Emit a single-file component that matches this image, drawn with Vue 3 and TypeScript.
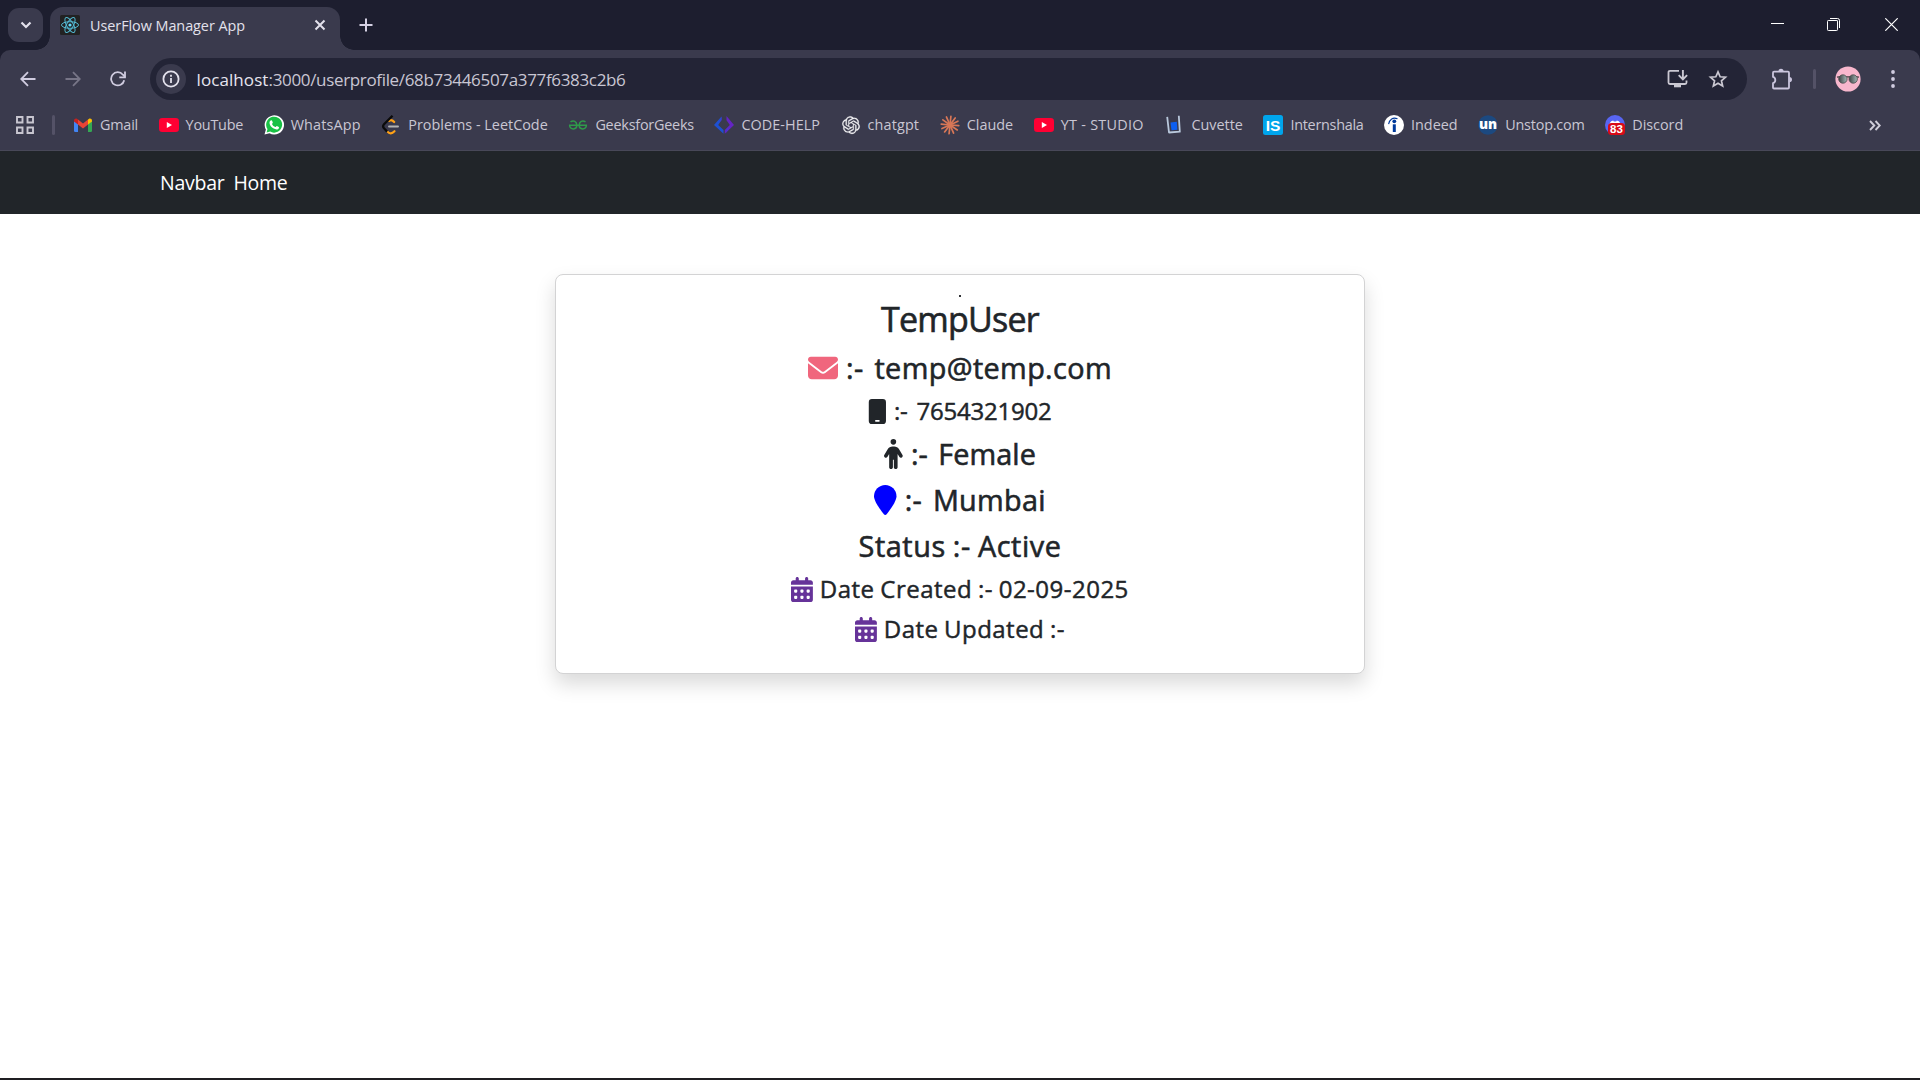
<script setup lang="ts">
import type { Directive } from 'vue'

interface Bookmark {
  id: string
  label: string
  width: number
}

interface ProfileRow {
  id: string
  size: 'lg' | 'md' | 'sm'
  text: string
  width: number
  icon?: 'mail' | 'phone' | 'person' | 'pin' | 'calendar'
}

/* Adjusts the tracking of a label until it takes the given width. */
const vFit: Directive<HTMLElement, number> = {
  mounted(el, { value }) {
    el.style.letterSpacing = '0px'
    const count = (el.textContent ?? '').length
    const natural = el.getBoundingClientRect().width
    el.style.letterSpacing = `${((value - natural) / count).toFixed(3)}px`
  },
}

const bookmarks: Bookmark[] = [
  { id: 'gmail', label: 'Gmail', width: 38 },
  { id: 'youtube', label: 'YouTube', width: 57.5 },
  { id: 'whatsapp', label: 'WhatsApp', width: 70 },
  { id: 'leetcode', label: 'Problems - LeetCode', width: 139.5 },
  { id: 'gfg', label: 'GeeksforGeeks', width: 98.5 },
  { id: 'codehelp', label: 'CODE-HELP', width: 78.5 },
  { id: 'chatgpt', label: 'chatgpt', width: 51.5 },
  { id: 'claude', label: 'Claude', width: 46.5 },
  { id: 'youtube', label: 'YT - STUDIO', width: 83 },
  { id: 'cuvette', label: 'Cuvette', width: 51.5 },
  { id: 'internshala', label: 'Internshala', width: 73 },
  { id: 'indeed', label: 'Indeed', width: 46.5 },
  { id: 'unstop', label: 'Unstop.com', width: 79.5 },
  { id: 'discord', label: 'Discord', width: 51 },
]

const rows: ProfileRow[] = [
  { id: 'name', size: 'lg', text: 'TempUser', width: 158 },
  { id: 'email', size: 'md', text: ':- temp@temp.com', width: 266, icon: 'mail' },
  { id: 'mobile', size: 'sm', text: ':- 7654321902', width: 157.5, icon: 'phone' },
  { id: 'gender', size: 'md', text: ':- Female', width: 125, icon: 'person' },
  { id: 'location', size: 'md', text: ':- Mumbai', width: 141, icon: 'pin' },
  { id: 'status', size: 'md', text: 'Status :- Active', width: 203 },
  { id: 'created', size: 'sm', text: 'Date Created :- 02-09-2025', width: 309, icon: 'calendar' },
  { id: 'updated', size: 'sm', text: 'Date Updated :-', width: 181, icon: 'calendar' },
]

const claudeRays = [0, 30, 58, 88, 118, 150, 180, 212, 240, 270, 300, 330]
</script>

<template>
  <div class="window">
    <header class="tabstrip">
      <button class="tab-search" aria-label="Search tabs">
        <svg width="12" height="8" viewBox="0 0 12 8"><path d="M1.500 1.500 6 6l4.500-4.500" fill="none" stroke="#e3e1ec" stroke-width="2.200" /></svg>
      </button>
      <div class="tab">
        <svg class="favicon" width="20" height="20" viewBox="0 0 20 20">
          <rect width="20" height="20" rx="1.500" fill="#222" />
          <g fill="none" stroke="#53b9d1" stroke-width="1">
            <ellipse cx="10" cy="10" rx="8.500" ry="3.300" />
            <ellipse cx="10" cy="10" rx="8.500" ry="3.300" transform="rotate(60 10 10)" />
            <ellipse cx="10" cy="10" rx="8.500" ry="3.300" transform="rotate(120 10 10)" />
          </g>
          <circle cx="10" cy="10" r="1.600" fill="#61dafb" />
        </svg>
        <span class="tab-title"><span v-fit="155">UserFlow Manager App</span></span>
        <svg class="tab-close" width="12" height="12" viewBox="0 0 12 12"><path d="M1.500 1.500l9 9M10.500 1.500l-9 9" stroke="#e3e1ec" stroke-width="2" /></svg>
      </div>
      <svg class="new-tab" width="14" height="14" viewBox="0 0 14 14"><path d="M7 .5v13M.5 7h13" stroke="#d5d1e4" stroke-width="2" /></svg>
      <div class="window-controls">
        <svg width="13" height="13" viewBox="0 0 13 13"><path d="M0 5.500h13" stroke="#fff" /></svg>
        <svg width="13" height="13" viewBox="0 0 13 13"><path d="M3 .5h7.500a2 2 0 0 1 2 2V10" fill="none" stroke="#fff" /><path d="M2.500 2.500h8v8" fill="none" stroke="#8d8d98" /><rect x=".5" y="2.500" width="10" height="10" rx=".8" fill="none" stroke="#fff" /></svg>
        <svg width="13" height="13" viewBox="0 0 13 13"><path d="M.3.3l12.400 12.400M12.700.3.3 12.700" stroke="#fff" stroke-width="1.200" /></svg>
      </div>
    </header>

    <section class="chrome">
      <div class="toolbar">
        <svg class="back" width="16" height="16" viewBox="0 0 16 16"><path d="M15.500 8H1.500M8 1.200 1.200 8 8 14.800" fill="none" stroke="#d0cce0" stroke-width="1.800" /></svg>
        <svg class="forward" width="16" height="16" viewBox="0 0 16 16"><path d="M.5 8h14M8 1.200 14.800 8 8 14.800" fill="none" stroke="#777587" stroke-width="1.800" /></svg>
        <svg class="reload" width="16" height="16" viewBox="0 0 16 16"><path d="M14.200 9.200A6.600 6.600 0 1 1 12.900 3.700L15 5.800" fill="none" stroke="#d0cce0" stroke-width="1.800" /><path d="M15 .5v5.800H9.300" fill="none" stroke="#d0cce0" stroke-width="1.800" /></svg>
        <div class="omnibox">
          <span class="site-info">
            <svg width="18" height="18" viewBox="0 0 18 18"><circle cx="9" cy="9" r="7.600" fill="none" stroke="#e3e1ec" stroke-width="1.800" /><path d="M9 8v5M9 4.800v1.900" stroke="#e3e1ec" stroke-width="1.800" /></svg>
          </span>
          <span class="url"><span v-fit="72" class="host">localhost</span><span v-fit="357">:3000/userprofile/68b73446507a377f6383c2b6</span></span>
          <svg class="install" width="21" height="20" viewBox="0 0 21 20"><path d="M12 1.800H3Q1.500 1.800 1.500 3.300V13.500Q1.500 15 3 15H18Q19.500 15 19.500 13.500V11.500" fill="none" stroke="#cac8d2" stroke-width="1.800" /><path d="M7 15h7v3.300H7z" fill="#cac8d2" /><path d="M15.900 1v9M11.700 6.200l4.200 4.200 4.200-4.200" fill="none" stroke="#cac8d2" stroke-width="1.900" /></svg>
          <svg class="star" width="20" height="20" viewBox="0 0 20 20"><path d="M10 2.800l2.150 4.950 5.350.5-4.050 3.550 1.200 5.250L10 14.250 5.350 17.050l1.200-5.250L2.500 8.250l5.350-.5z" fill="none" stroke="#cac8d2" stroke-width="1.700" /></svg>
        </div>
        <svg class="puzzle" width="22" height="22" viewBox="0 0 22 22"><path d="M2 4.700Q2 3.700 3 3.700H17Q18 3.700 18 4.700V19.500Q18 20.500 17 20.500H3Q2 20.500 2 19.500V15.200A3.300 3.300 0 0 0 2 8.900Z" fill="none" stroke="#cbc6de" stroke-width="1.800" stroke-linejoin="round" /><path d="M7.400 3.500A2.600 2.800 0 0 1 12.600 3.500ZM18.300 9A2.700 2.600 0 0 1 18.300 14.200Z" fill="#cbc6de" /></svg>
        <span class="separator"></span>
        <svg class="avatar" width="26" height="26" viewBox="0 0 26 26">
          <defs>
            <linearGradient id="lens"><stop offset="0" stop-color="#3c4143" /><stop offset="1" stop-color="#a5b8b7" /></linearGradient>
          </defs>
          <circle cx="13" cy="13" r="12.600" fill="#f8b7cd" />
          <path d="M2 11.200 4 10.800H22l2 .4" fill="none" stroke="#443f42" stroke-width="1.200" />
          <circle cx="7.900" cy="13" r="4.200" fill="url(#lens)" stroke="#4d4a4b" stroke-width=".8" />
          <circle cx="18.200" cy="13" r="4.200" fill="url(#lens)" stroke="#4d4a4b" stroke-width=".8" />
        </svg>
        <svg class="more" width="4" height="18" viewBox="0 0 4 18"><g fill="#d0cce0"><circle cx="2" cy="2" r="1.900" /><circle cx="2" cy="9" r="1.900" /><circle cx="2" cy="16" r="1.900" /></g></svg>
      </div>

      <nav class="bookmarks">
        <svg class="apps" width="18" height="18" viewBox="0 0 18 18"><path d="M1 1h5.500v5.500H1zM11.500 1H17v5.500h-5.500zM1 11.500h5.500V17H1zM11.500 11.500H17V17h-5.500z" fill="none" stroke="#c8c6d0" stroke-width="1.900" /></svg>
        <span class="separator bookmarks-separator"></span>
        <div v-for="mark in bookmarks" :key="mark.label" class="bookmark">
          <svg width="20" height="20" viewBox="0 0 20 20">
            <template v-if="mark.id === 'gmail'">
              <path d="M1 5.500v10.200a1.300 1.300 0 0 0 1.300 1.300H5V9z" fill="#4285f4" />
              <path d="M19 5.500v10.200a1.300 1.300 0 0 1-1.300 1.300H15V9z" fill="#34a853" />
              <path d="M5 4.600 10 8.500l5-3.900v4.900l-5 3.900-5-3.900z" fill="#ea4335" />
              <path d="M15 4.600l.8-.7c1.400-1 3.200 0 3.200 1.600v1.100l-4 3z" fill="#fbbc04" />
              <path d="M5 4.600l-.8-.7C2.800 2.900 1 3.900 1 5.500v1.100l4 3z" fill="#c5221f" />
            </template>
            <template v-else-if="mark.id === 'youtube'">
              <rect y="3" width="20" height="14" rx="3.300" fill="#ff0033" />
              <path d="M7.800 7v6l5.200-3z" fill="#fff" />
            </template>
            <template v-else-if="mark.id === 'whatsapp'">
              <path d="M.5 19.600 1.900 14.600A9.700 9.600 0 1 1 5.500 18.200z" fill="#fff" />
              <path d="M2.600 17.500l.9-3.400A8 8 0 1 1 6.200 16.600z" fill="#19c145" />
              <path d="M7.400 5.300c.5 0 .6.200.8.600l.6 1.500c.1.500-.7 1.100-.8 1.500.7 1.500 1.800 2.500 3.400 3.200.5-.1 1-1.200 1.500-1.100l1.900.9c.5.300.1 1.600-.5 2-1.300.9-3.100.5-4.600-.3-2.200-1.200-4.200-3.600-4.200-5.700 0-1.400 1-2.600 1.900-2.600z" fill="#fff" />
            </template>
            <template v-else-if="mark.id === 'leetcode'">
              <path d="M8 5.800Q10.500 3.800 13.200 7M6.500 16.600Q9.500 20.300 13.500 16.200" fill="none" stroke="#ffa116" stroke-width="2.200" stroke-linecap="round" />
              <path d="M11.500.8 3 9.300Q1.200 11.300 3 13.300L6.200 16.600" fill="none" stroke="#0b0b0b" stroke-width="2.300" />
              <path d="M8 11.500h9" stroke="#b3b3b3" stroke-width="1.900" stroke-linecap="round" />
            </template>
            <template v-else-if="mark.id === 'gfg'">
              <path d="M1 10.300H19M2.500 6.900C5.500 4.800 8.800 6.500 8.800 10.300 8.800 15 2.300 15.200 1.600 10.500M17.500 6.900C14.500 4.800 11.200 6.500 11.200 10.300 11.200 15 17.700 15.200 18.400 10.500" fill="none" stroke="#2f9a4a" stroke-width="1.600" />
            </template>
            <template v-else-if="mark.id === 'codehelp'">
              <path d="M7.500 1.500V5L4.200 10 9.500 15V18.700L0 10z" fill="#1e50d2" />
              <path d="M12.500 1v4.200l3.300 4.800L10.800 15v3.700L20 10z" fill="#6424c4" />
              <path d="M7.500 1.500v3.800L5 8zM12.500 18v-4L15 12z" fill="#433bd0" />
            </template>
            <template v-else-if="mark.id === 'chatgpt'">
              <path transform="translate(1.200 1.300) scale(.735)" fill="#f0f0f3" stroke="#f0f0f3" stroke-width=".3" d="M22.2819 9.8211a5.9847 5.9847 0 0 0-.5157-4.9108 6.0462 6.0462 0 0 0-6.5098-2.9A6.0651 6.0651 0 0 0 4.9807 4.1818a5.9847 5.9847 0 0 0-3.9977 2.9 6.0462 6.0462 0 0 0 .7427 7.0966 5.98 5.98 0 0 0 .511 4.9107 6.051 6.051 0 0 0 6.5146 2.9001A5.9847 5.9847 0 0 0 13.2599 24a6.0557 6.0557 0 0 0 5.7718-4.2058 5.9894 5.9894 0 0 0 3.9977-2.9001 6.0557 6.0557 0 0 0-.7475-7.0729zm-9.022 12.6081a4.4755 4.4755 0 0 1-2.8764-1.0408l.1419-.0804 4.7783-2.7582a.7948.7948 0 0 0 .3927-.6813v-6.7369l2.02 1.1686a.071.071 0 0 1 .038.052v5.5826a4.504 4.504 0 0 1-4.4945 4.4944zm-9.6607-4.1254a4.4708 4.4708 0 0 1-.5346-3.0137l.142.0852 4.783 2.7582a.7712.7712 0 0 0 .7806 0l5.8428-3.3685v2.3324a.0804.0804 0 0 1-.0332.0615L9.74 19.9502a4.4992 4.4992 0 0 1-6.1408-1.6464zM2.3408 7.8956a4.485 4.485 0 0 1 2.3655-1.9728V11.6a.7664.7664 0 0 0 .3879.6765l5.8144 3.3543-2.0201 1.1685a.0757.0757 0 0 1-.071 0l-4.8303-2.7865A4.504 4.504 0 0 1 2.3408 7.872zm16.5963 3.8558L13.1038 8.364 15.1192 7.2a.0757.0757 0 0 1 .071 0l4.8303 2.7913a4.4944 4.4944 0 0 1-.6765 8.1042v-5.6772a.79.79 0 0 0-.407-.667zm2.0107-3.0231l-.142-.0852-4.7735-2.7818a.7759.7759 0 0 0-.7854 0L9.409 9.2297V6.8974a.0662.0662 0 0 1 .0284-.0615l4.8303-2.7866a4.4992 4.4992 0 0 1 6.6802 4.66zM8.3065 12.863l-2.02-1.1638a.0804.0804 0 0 1-.038-.0567V6.0742a4.4992 4.4992 0 0 1 7.3757-3.4537l-.142.0805L8.704 5.459a.7948.7948 0 0 0-.3927.6813zm1.0976-2.3654l2.602-1.4998 2.6069 1.4998v2.9994l-2.5974 1.4997-2.6067-1.4997Z" />
            </template>
            <template v-else-if="mark.id === 'claude'">
              <path v-for="ray in claudeRays" :key="ray" d="M10 10V1.200" :transform="`rotate(${ray + 6} 10 10)`" stroke="#d97757" stroke-width="1.700" stroke-linecap="round" />
            </template>
            <template v-else-if="mark.id === 'cuvette'">
              <path d="M3.200 1.800 5 17.500l10.800-.8L14.800.8" fill="none" stroke="#b9c8dc" stroke-width="1.800" stroke-linejoin="round" />
              <path d="M6.500 7.500l6.300-.8.6 8-5.900.6z" fill="#0d5ff2" />
            </template>
            <template v-else-if="mark.id === 'internshala'">
              <rect width="20" height="20" rx="2.500" fill="#00a5ec" />
              <text x="10" y="15.500" class="glyph" font-size="15.500" text-anchor="middle">IS</text>
            </template>
            <template v-else-if="mark.id === 'indeed'">
              <circle cx="10" cy="10" r="10" fill="#fff" />
              <circle cx="10.300" cy="6.300" r="1.900" fill="#003a9b" />
              <path d="M10.300 9.300v7.700" stroke="#003a9b" stroke-width="3" />
              <path d="M4.600 9.200C5.400 4.300 9 1.800 13.500 3.800" fill="none" stroke="#003a9b" stroke-width="1.100" />
            </template>
            <template v-else-if="mark.id === 'unstop'">
              <circle cx="10" cy="10" r="9.800" fill="#1c4980" />
              <text x="10" y="13.800" class="glyph unstop-glyph" font-size="13.500" text-anchor="middle">un</text>
            </template>
            <template v-else>
              <circle cx="10" cy="10" r="10" fill="#5865f2" />
              <path d="M4 13c0-3.500 1-6 2.200-6.800l2-.7.6 1h2.400l.6-1 2 .7C15 7 16 9.500 16 13z" fill="#fff" />
              <rect x="3" y="8" width="17" height="12" rx="3.500" fill="#d90b17" />
              <text x="11.500" y="18" class="glyph" font-size="11.500" text-anchor="middle">83</text>
            </template>
          </svg>
          <span class="bookmark-label"><span v-fit="mark.width">{{ mark.label }}</span></span>
        </div>
        <svg class="overflow" width="12" height="11" viewBox="0 0 12 11"><path d="M1 1l4.300 4.500L1 10M6.500 1l4.300 4.500L6.500 10" fill="none" stroke="#d0ceda" stroke-width="1.900" /></svg>
      </nav>
    </section>

    <nav class="navbar">
      <a><span v-fit="64.500">Navbar</span></a>
      <a><span v-fit="54">Home</span></a>
    </nav>

    <main class="page">
      <section class="card">
        <span class="photo"></span>
        <div v-for="row in rows" :key="row.id" class="row" :class="[row.size, { detail: row.text.startsWith(':-') }]">
          <svg v-if="row.icon === 'mail'" class="icon mail" viewBox="0 0 512 512"><path d="M48 64C21.500 64 0 85.500 0 112c0 15.100 7.100 29.300 19.200 38.400L236.800 313.600c11.400 8.500 27 8.500 38.400 0L492.800 150.400c12.100-9.100 19.200-23.300 19.200-38.400c0-26.500-21.500-48-48-48H48zM0 176V384c0 35.300 28.700 64 64 64H448c35.300 0 64-28.700 64-64V176L294.400 339.200c-22.800 17.100-54 17.100-76.800 0L0 176z" /></svg>
          <svg v-else-if="row.icon === 'phone'" class="icon" viewBox="0 0 384 512"><path d="M80 0H304a64 64 0 0 1 64 64V448a64 64 0 0 1-64 64H80a64 64 0 0 1-64-64V64A64 64 0 0 1 80 0zM160 432a16 16 0 0 0 0 32h64a16 16 0 0 0 0-32z" /></svg>
          <svg v-else-if="row.icon === 'person'" class="icon" viewBox="0 0 320 512"><path d="M112 48a48 48 0 1 1 96 0 48 48 0 1 1-96 0zm40 304V480c0 17.700-14.300 32-32 32s-32-14.300-32-32V256.900L59.400 304.500c-9.100 15.100-28.800 20-43.900 10.900s-20-28.800-10.900-43.900l58.300-97c17.400-28.900 48.600-46.600 82.300-46.600h29.700c33.700 0 64.900 17.700 82.300 46.600l58.300 97c9.100 15.100 4.200 34.800-10.900 43.900s-34.800 4.200-43.900-10.900L232 256.900V480c0 17.700-14.300 32-32 32s-32-14.300-32-32V352H152z" /></svg>
          <svg v-else-if="row.icon === 'pin'" class="icon pin" viewBox="0 0 384 512"><path d="M384 192c0 87.400-117 243-168.300 307.200c-12.300 15.300-35.100 15.300-47.400 0C117 435 0 279.400 0 192C0 86 86 0 192 0S384 86 384 192z" /></svg>
          <svg v-else-if="row.icon === 'calendar'" class="icon calendar" viewBox="0 0 448 512"><path d="M128 0c17.700 0 32 14.300 32 32V64H288V32c0-17.700 14.300-32 32-32s32 14.300 32 32V64h48c26.500 0 48 21.500 48 48v48H0V112C0 85.500 21.500 64 48 64H96V32c0-17.700 14.300-32 32-32zM0 192H448V464c0 26.500-21.500 48-48 48H48c-26.500 0-48-21.500-48-48V192zm64 80v32c0 8.800 7.200 16 16 16h32c8.800 0 16-7.200 16-16V272c0-8.800-7.200-16-16-16H80c-8.800 0-16 7.200-16 16zm128 0v32c0 8.800 7.200 16 16 16h32c8.800 0 16-7.200 16-16V272c0-8.800-7.200-16-16-16H208c-8.800 0-16 7.200-16 16zm144-16c-8.800 0-16 7.200-16 16v32c0 8.800 7.200 16 16 16h32c8.800 0 16-7.200 16-16V272c0-8.800-7.200-16-16-16H336zM64 400v32c0 8.800 7.200 16 16 16h32c8.800 0 16-7.200 16-16V400c0-8.800-7.200-16-16-16H80c-8.800 0-16 7.200-16 16zm144-16c-8.800 0-16 7.200-16 16v32c0 8.800 7.200 16 16 16h32c8.800 0 16-7.200 16-16V400c0-8.800-7.200-16-16-16H208zm112 16v32c0 8.800 7.200 16 16 16h32c8.800 0 16-7.200 16-16V400c0-8.800-7.200-16-16-16H336c-8.800 0-16 7.200-16 16z" /></svg>
          <span v-fit="row.width">{{ row.text }}</span>
        </div>
      </section>
    </main>
  </div>
</template>

<style>
html,
body {
  margin: 0;
  overflow: hidden;
}
</style>

<style scoped>
.window {
  box-sizing: border-box;
  width: 1920px;
  height: 1080px;
  display: flex;
  flex-direction: column;
  overflow: hidden;
  background: linear-gradient(#1d1e2f 0 100px, #fff 100px);
  border-bottom: 2px solid #1f1e22;
  font-family: 'Open Sans', 'Noto Sans', sans-serif;
  white-space: nowrap;
}

svg {
  display: block;
  flex: none;
}

.tabstrip {
  display: flex;
  align-items: center;
  height: 50px;
  flex: none;
  background: #1d1e2f;
}

.tab-search {
  display: flex;
  align-items: center;
  justify-content: center;
  width: 35px;
  height: 34px;
  margin-left: 8px;
  padding: 0;
  border: 0;
  border-radius: 11px;
  background: #3a3a4d;
}

.tab {
  position: relative;
  box-sizing: border-box;
  display: flex;
  align-items: center;
  align-self: flex-end;
  width: 290px;
  height: 43px;
  margin-left: 7px;
  padding: 0 14px 7px 10px;
  border-radius: 13px 13px 0 0;
  background: #3a3a4d;
}

.tab::before,
.tab::after {
  content: '';
  position: absolute;
  bottom: 0;
  width: 14px;
  height: 14px;
}

.tab::before {
  left: -14px;
  background: radial-gradient(circle at 0 0, transparent 13.5px, #3a3a4d 14px);
}

.tab::after {
  right: -14px;
  background: radial-gradient(circle at 100% 0, transparent 13.5px, #3a3a4d 14px);
}

.tab-title {
  flex: 1;
  margin-left: 10px;
  padding-top: 1px;
  font-size: 14.400px;
  line-height: 20px;
  color: #e3e1ec;
}

.new-tab {
  margin-left: 19px;
}

.window-controls {
  display: flex;
  gap: 43px;
  margin: 0 22px 1px auto;
}

.window-controls svg:last-child {
  margin-left: 2px;
}

.chrome {
  box-sizing: border-box;
  height: 101px;
  flex: none;
  border-bottom: 1px solid #484858;
  border-radius: 10px 10px 0 0;
  background: #3a3a4d;
}

.toolbar {
  display: flex;
  align-items: center;
  height: 58px;
}

.back {
  margin: 0 0 1px 20px;
}

.forward {
  margin: 0 0 1px 28.500px;
}

.reload {
  margin: 0 0 1px 29.500px;
}

.omnibox {
  box-sizing: border-box;
  display: flex;
  align-items: center;
  width: 1597px;
  height: 42px;
  margin-left: 24px;
  padding: 0 19px 0 6px;
  border-radius: 21px;
  background: #232436;
}

.site-info {
  display: flex;
  align-items: center;
  justify-content: center;
  width: 30px;
  height: 30px;
  border-radius: 50%;
  background: #3a3a4d;
}

.url {
  flex: 1;
  margin-left: 10.500px;
  padding-top: 1px;
  font-size: 17px;
  line-height: 24px;
  color: #c9c6d3;
}

.host {
  color: #e6e4ef;
}

.star {
  margin-left: 20px;
}

.puzzle {
  margin: 0 0 1px 24px;
}

.separator {
  width: 3px;
  height: 20px;
  margin-left: 20px;
  border-radius: 2px;
  background: #545267;
}

.avatar {
  margin: 0 0 1px 18.500px;
}

.more {
  margin: 0 0 1px 30px;
}

.bookmarks {
  display: flex;
  align-items: center;
  height: 34px;
}

.apps {
  margin-left: 16px;
}

.bookmarks-separator {
  margin: 0 18px 0 18px;
}

.bookmark {
  display: flex;
  align-items: center;
  font-size: 14.400px;
  line-height: 20px;
  color: #c9c6d3;
}

.bookmark-label {
  margin: 0 20.600px 0 7px;
}

.glyph {
  font-family: 'Liberation Sans', sans-serif;
  font-weight: 700;
  fill: #fff;
}

.unstop-glyph {
  font-family: 'Open Sans', sans-serif;
  font-weight: 800;
}

.overflow {
  margin: 0 39px 0 auto;
}

.navbar {
  display: flex;
  align-items: center;
  gap: 9px;
  height: 63px;
  flex: none;
  padding-left: 160px;
  background: #212529;
  color: #fff;
  font-size: 19.500px;
  line-height: 30px;
}

.page {
  flex: 1;
  display: flex;
  align-items: flex-start;
  justify-content: center;
  padding-top: 60px;
  background: #fff;
}

.card {
  box-sizing: border-box;
  display: flex;
  flex-direction: column;
  align-items: center;
  gap: 10px;
  width: 810px;
  height: 400px;
  padding-top: 20px;
  border: 1px solid #d3d3d4;
  border-radius: 8px;
  background: #fff;
  box-shadow: 0 10px 20px rgba(0, 0, 0, 0.15);
  color: #212529;
}

.photo {
  width: 2px;
  height: 2px;
  margin-bottom: -9px;
  background: #303236;
}

.row {
  display: flex;
  align-items: center;
  justify-content: center;
  font-weight: 500;
  word-spacing: -1px;
  -webkit-text-stroke: 0.600px #212529;
}

.detail {
  word-spacing: 3px;
}

.lg {
  height: 42px;
  font-size: 34px;
  line-height: 42px;
}

.md {
  gap: 8px;
  height: 36px;
  font-size: 28.800px;
  line-height: 36px;
}

.sm {
  gap: 6.800px;
  height: 30px;
  font-size: 24px;
  line-height: 30px;
  -webkit-text-stroke-width: 0.450px;
}

.icon {
  height: 30px;
  fill: #212529;
  stroke: none;
}

.sm .icon {
  height: 25px;
}

.mail {
  fill: #f0667d;
}

.pin {
  fill: #00f;
}

.calendar {
  fill: #663399;
}
</style>
